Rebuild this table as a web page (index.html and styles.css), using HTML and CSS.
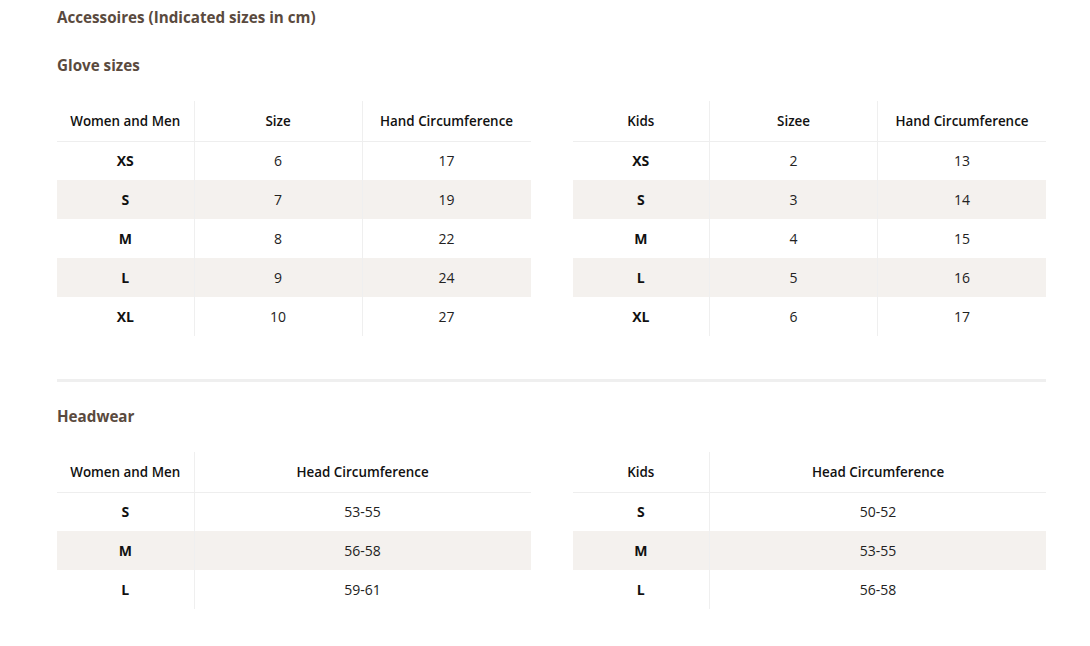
FILE: index.html
```html
<!DOCTYPE html>
<html>
<head>
<meta charset="utf-8">
<link rel="stylesheet" href="styles.css">
</head>
<body>
<div class="page">
  <h1 class="title">Accessoires (Indicated sizes in cm)</h1>
  <h2 class="section-title glove">Glove sizes</h2>
  <div class="tables">
    <table class="size-table three">
      <thead><tr><th>Women and Men</th><th>Size</th><th>Hand Circumference</th></tr></thead>
      <tbody>
        <tr><td class="lbl">XS</td><td>6</td><td>17</td></tr>
        <tr><td class="lbl">S</td><td>7</td><td>19</td></tr>
        <tr><td class="lbl">M</td><td>8</td><td>22</td></tr>
        <tr><td class="lbl">L</td><td>9</td><td>24</td></tr>
        <tr><td class="lbl">XL</td><td>10</td><td>27</td></tr>
      </tbody>
    </table>
    <table class="size-table three">
      <thead><tr><th>Kids</th><th>Sizee</th><th>Hand Circumference</th></tr></thead>
      <tbody>
        <tr><td class="lbl">XS</td><td>2</td><td>13</td></tr>
        <tr><td class="lbl">S</td><td>3</td><td>14</td></tr>
        <tr><td class="lbl">M</td><td>4</td><td>15</td></tr>
        <tr><td class="lbl">L</td><td>5</td><td>16</td></tr>
        <tr><td class="lbl">XL</td><td>6</td><td>17</td></tr>
      </tbody>
    </table>
  </div>
  <hr class="rule">
  <h2 class="section-title head">Headwear</h2>
  <div class="tables">
    <table class="size-table two">
      <thead><tr><th>Women and Men</th><th>Head Circumference</th></tr></thead>
      <tbody>
        <tr><td class="lbl">S</td><td>53-55</td></tr>
        <tr><td class="lbl">M</td><td>56-58</td></tr>
        <tr><td class="lbl">L</td><td>59-61</td></tr>
      </tbody>
    </table>
    <table class="size-table two">
      <thead><tr><th>Kids</th><th>Head Circumference</th></tr></thead>
      <tbody>
        <tr><td class="lbl">S</td><td>50-52</td></tr>
        <tr><td class="lbl">M</td><td>53-55</td></tr>
        <tr><td class="lbl">L</td><td>56-58</td></tr>
      </tbody>
    </table>
  </div>
</div>
</body>
</html>
```
FILE: styles.css
```css
* { box-sizing: border-box; }
html, body { margin: 0; padding: 0; background: #fff; }
body {
  font-family: "Open Sans", "Noto Sans", "Liberation Sans", sans-serif;
  color: #111;
}
.page {
  width: 989px;
  margin-left: 57px;
  padding-top: 6px;
}
.title {
  margin: 0;
  font-size: 15.2px;
  font-weight: 700;
  line-height: 22px;
  color: #5a4a3e;
}
.section-title {
  margin: 0;
  font-size: 15.2px;
  font-weight: 700;
  line-height: 22px;
  color: #5a4a3e;
}
.glove { margin-top: 26px; }
.head { margin-top: 23px; }
.tables {
  display: flex;
  gap: 42px;
  margin-top: 25px;
}
.size-table {
  flex: 1;
  border-collapse: collapse;
  table-layout: fixed;
  font-size: 14px;
}
.size-table th, .size-table td {
  text-align: center;
  padding: 0;
  height: 39px;
  border-left: 1px solid #efefef;
}
.size-table th:first-child, .size-table td:first-child { border-left: none; }
.size-table th {
  font-weight: 600;
  font-size: 13.4px;
  height: 40px;
  border-bottom: 1px solid #eeeeee;
  color: #111;
}
.size-table td { font-weight: 400; color: #222; }
.size-table td.lbl { font-weight: 700; color: #111; font-size: 14px; }
.size-table tbody tr:nth-child(even) td { background: #f4f1ee; }
.three th:nth-child(1) { width: 137px; }
.three th:nth-child(2) { width: 168px; }
.two th:nth-child(1) { width: 137px; }
.rule {
  margin: 43px 0 0 0;
  border: none;
  height: 3px;
  background: #efefef;
}
```
